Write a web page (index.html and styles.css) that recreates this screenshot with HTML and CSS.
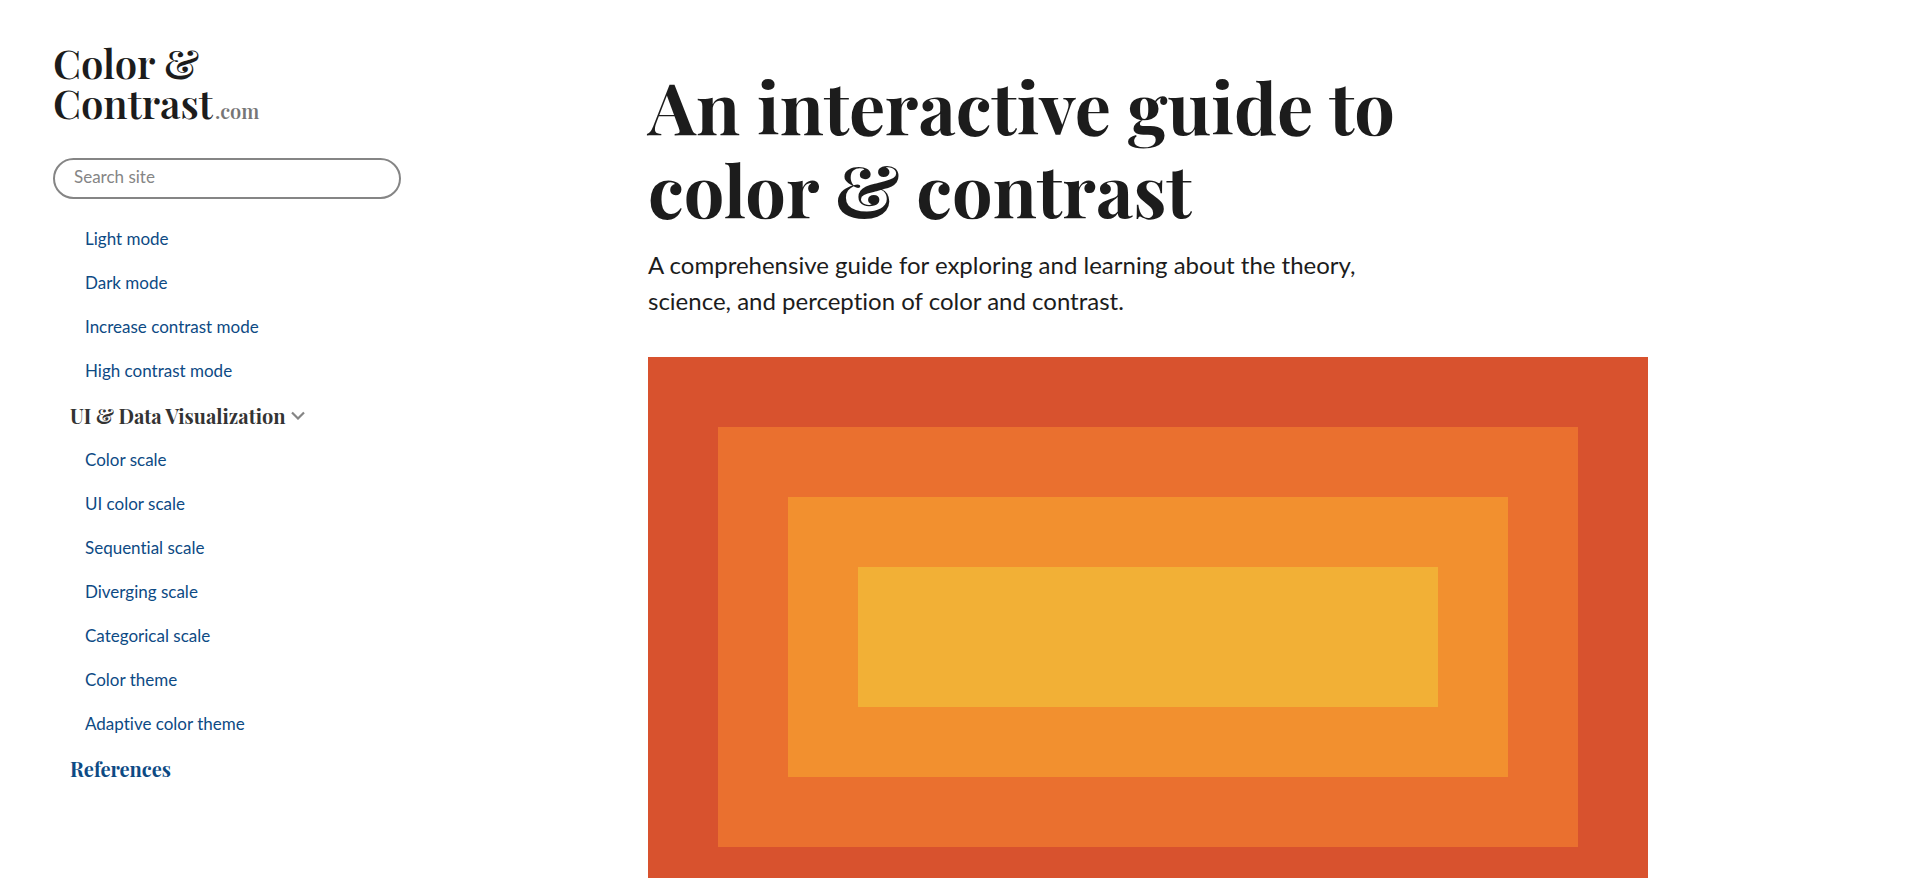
FILE: index.html
```
<!DOCTYPE html>
<html lang="en">
<head>
  <meta charset="UTF-8" />
  <meta name="viewport" content="width=device-width, initial-scale=1.0"/>
  <title>Color &amp; Contrast</title>
  <link rel="stylesheet" href="styles.css">
</head>
<body>

  <!-- Sidebar -->
  <aside class="sidebar">
    <a class="logo" href="#">Color &amp;<br>Contrast<span class="logo-tld">.com</span></a>

    <form class="search" role="search">
      <input type="search" placeholder="Search site" aria-label="Search site">
    </form>

    <nav class="nav">
      <ul class="nav-list">
        <li><a href="#light-mode">Light mode</a></li>
        <li><a href="#dark-mode">Dark mode</a></li>
        <li><a href="#increase-contrast-mode">Increase contrast mode</a></li>
        <li><a href="#high-contrast-mode">High contrast mode</a></li>
      </ul>

      <button class="nav-heading" type="button" aria-expanded="true">
        UI &amp; Data Visualization
        <svg class="chevron" viewBox="0 0 14 9" aria-hidden="true">
          <path d="M1 1.500l6 6 6-6" fill="none" stroke="currentColor" stroke-width="2.200"/>
        </svg>
      </button>
      <ul class="nav-list">
        <li><a href="#color-scale">Color scale</a></li>
        <li><a href="#ui-color-scale">UI color scale</a></li>
        <li><a href="#sequential-scale">Sequential scale</a></li>
        <li><a href="#diverging-scale">Diverging scale</a></li>
        <li><a href="#categorical-scale">Categorical scale</a></li>
        <li><a href="#color-theme">Color theme</a></li>
        <li><a href="#adaptive-color-theme">Adaptive color theme</a></li>
      </ul>

      <a class="nav-heading nav-heading-link" href="#references">References</a>
    </nav>
  </aside>

  <!-- Content -->
  <main>
    <div class="content">
      <h1>An interactive guide to<br>color &amp; contrast</h1>
      <p class="intro">A comprehensive guide for exploring and learning about the theory, science, and perception of color and contrast.</p>

      <div class="hero">
        <div class="hero-outer">
          <div class="hero-middle">
            <div class="hero-center"></div>
          </div>
        </div>
      </div>
    </div>
  </main>

</body>
</html>
```

FILE: styles.css
```
/* General Styles */
* {
  box-sizing: border-box;
}

body {
  margin: 0;
  display: grid;
  grid-template-columns: 401px minmax(0, 1fr);
  font-family: Lato, sans-serif;
  font-variant-ligatures: none;
  background-color: #fff;
  color: #1c1c1c;
}

a {
  color: #0d4a84;
  text-decoration: none;
}

a:hover {
  text-decoration: underline;
}

/* Sidebar */
.sidebar {
  padding: 43px 0 40px 53px;
}

.logo {
  display: block;
  font-family: "Playfair Display", "Liberation Serif", serif;
  font-size: 40px;
  font-weight: 600;
  line-height: 40px;
  color: #1c1c1c;
}

.logo-tld {
  margin-left: 2px;
  font-size: 20px;
  line-height: 24px;
  color: #767676;
}

.search {
  margin-top: 35px;
}

.search input {
  display: block;
  width: 100%;
  height: 41px;
  padding: 0 19px 4px;
  border: 2px solid #858585;
  border-radius: 21px;
  background: #fff;
  font: 17px/24px Lato, sans-serif;
  color: #1c1c1c;
  appearance: none;
}

.search input::placeholder {
  color: #858585;
}

/* Navigation */
.nav {
  margin-top: 18px;
}

.nav-list {
  margin: 0;
  padding: 0 0 0 32px;
  list-style: none;
  font-size: 17px;
  line-height: 44px;
}

.nav-heading {
  display: flex;
  align-items: center;
  gap: 5px;
  padding: 0 0 0 17px;
  border: 0;
  background: none;
  font-family: "Playfair Display", "Liberation Serif", serif;
  font-size: 20px;
  font-weight: 700;
  line-height: 45px;
  color: #333;
  cursor: pointer;
}

.nav-heading-link {
  color: #0d4a84;
}

.chevron {
  width: 14px;
  height: 9px;
  color: #858585;
}

/* Content */
main {
  padding: 64px 25px 0 0;
}

.content {
  max-width: 1000px;
  margin: 0 auto;
}

h1 {
  margin: 0;
  font-family: "Playfair Display", "Liberation Serif", serif;
  font-size: 72px;
  font-weight: 700;
  line-height: 83px;
}

.intro {
  max-width: 740px;
  margin: 17px 0 38px;
  font-size: 24px;
  line-height: 36px;
}

/* Nested color fields */
.hero {
  padding: 70px;
  background-color: #d8522e;
}

.hero-outer {
  padding: 70px;
  background-color: #ea702f;
}

.hero-middle {
  padding: 70px;
  background-color: #f2902f;
}

.hero-center {
  height: 140px;
  background-color: #f2b036;
}
```
